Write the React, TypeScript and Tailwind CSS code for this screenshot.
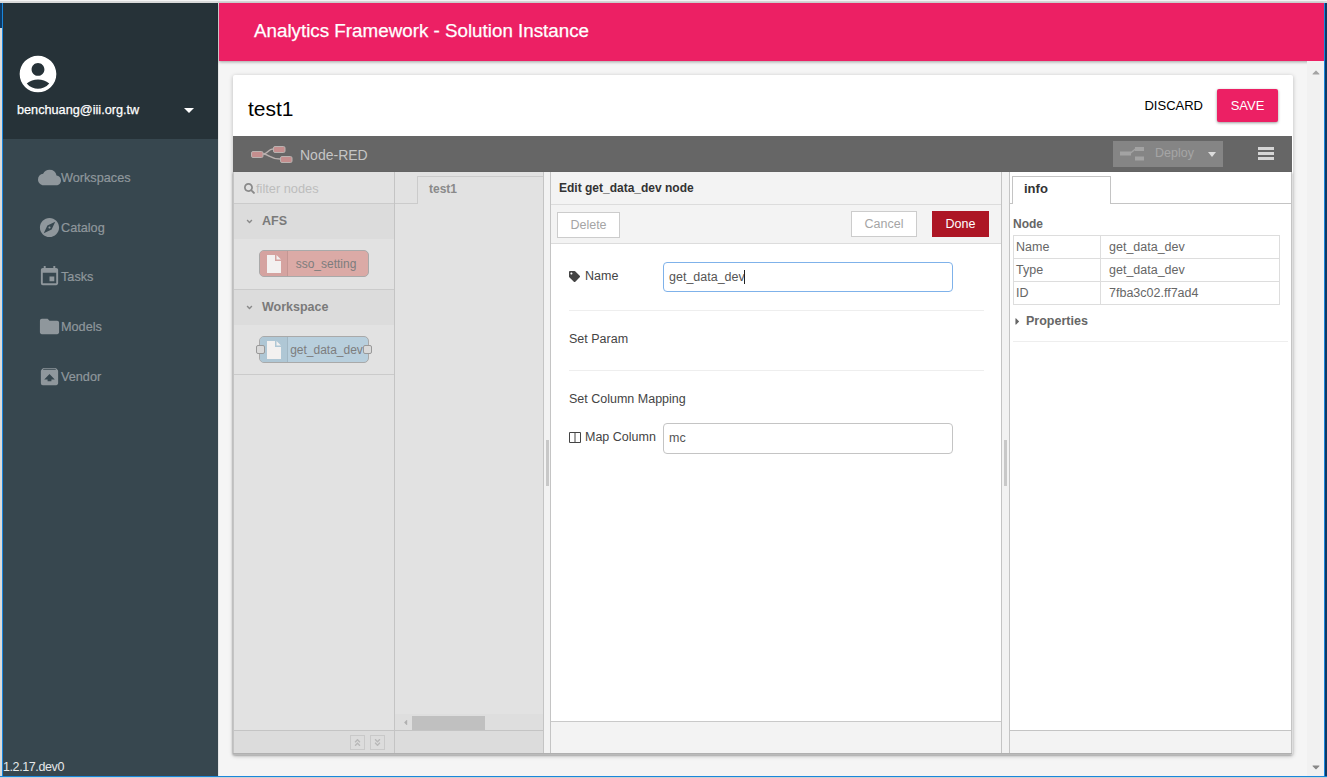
import React from "react";
import {
  MdAccountCircle, MdArrowDropDown, MdCloud, MdExplore, MdEvent, MdFolder, MdUnarchive,
} from "react-icons/md";
import {
  FaSearch, FaTag, FaAngleDown, FaCaretRight, FaAngleDoubleUp, FaAngleDoubleDown, FaCaretDown,
} from "react-icons/fa";

const arial = "font-['Liberation_Sans',Arial,sans-serif]";

const nav = [
  { label: "Workspaces", Icon: MdCloud },
  { label: "Catalog", Icon: MdExplore },
  { label: "Tasks", Icon: MdEvent },
  { label: "Models", Icon: MdFolder },
  { label: "Vendor", Icon: MdUnarchive },
];

function FileIcon() {
  return (
    <svg width="14" height="18" viewBox="0 0 14 18">
      <path d="M0 0H8V6H14V18H0Z" fill="#f3f1f0" />
      <path d="M9.500 0L14 4.500H9.500Z" fill="#f3f1f0" />
    </svg>
  );
}

function PaletteNode({ label, color, iconColor, ports }: { label: string; color: string; iconColor: string; ports?: boolean }) {
  return (
    <div className="relative w-[110px] h-[27px] rounded-[5px] border border-[#a9a9a9] flex" style={{ background: color }}>
      <div className="w-[28px] rounded-l-[4px] flex items-center justify-center border-r border-[#00000014]" style={{ background: iconColor }}>
        <FileIcon />
      </div>
      <div className={`flex-1 text-center text-[12px] leading-[26px] text-[#7d7d7d] whitespace-nowrap ${ports ? "pr-[3px]" : "pr-[4px]"}`}>{label}</div>
      {ports && (
        <>
          <span className="absolute left-[-4px] top-[8px] w-[9px] h-[9px] rounded-[2px] bg-[#d9d9d9] border border-[#999]" />
          <span className="absolute right-[-4px] top-[8px] w-[9px] h-[9px] rounded-[2px] bg-[#d9d9d9] border border-[#999]" />
        </>
      )}
    </div>
  );
}

function Category({ label, tall, children }: { label: string; tall?: boolean; children: React.ReactNode }) {
  return (
    <div className="border-b border-[#cbcbcb]">
      <div className="h-[35px] pb-[1px] bg-[#dcdcdc] flex items-center text-[12.5px] font-bold text-[#7a7a7a]">
        <FaAngleDown className="ml-[11px] mr-[8px] text-[9px] text-[#8a8a8a]" />
        {label}
      </div>
      <div className={`${tall ? "h-[50px]" : "h-[49px]"} pl-[25px] pt-[11px] bg-[#e2e2e2]`}>{children}</div>
    </div>
  );
}

function Row({ k, v }: { k: string; v: string }) {
  return (
    <div className="flex h-[23px] last:h-[22px] border-b border-[#dddddd] last:border-b-0 text-[12.5px] leading-[22px] text-[#666]">
      <div className="w-[87px] pl-[2px] border-r border-[#dddddd]">{k}</div>
      <div className="pl-[8px]">{v}</div>
    </div>
  );
}

export default function App() {
  return (
    <div className={`w-[1327px] h-[778px] overflow-hidden flex flex-col bg-[#f5f5f5] ${arial}`}>
      <div className="h-[3px] bg-[#d9d9d9] border-t border-[#f4f4f4] shrink-0" />
      <div className="flex-1 flex min-h-0">
        <div className="w-[2px] flex flex-col bg-[#dcdcdc] shrink-0">
          <div className="h-[25px] bg-[#0d3a66]" />
        </div>
        <div className="w-px bg-[#1a86dc] shrink-0" />
        {/* sidebar */}
        <aside className="w-[215px] flex flex-col bg-[#37474f] shrink-0">
          <div className="h-[136px] bg-[#263238] text-white px-[14px] pt-[49px] shrink-0">
            <MdAccountCircle className="text-[44px] -ml-[1px]" />
            <div className="mt-[2px] flex items-center justify-between pr-[3px]">
              <span className="text-[12.7px] leading-[20px] [-webkit-text-stroke:0.25px_white]">benchuang@iii.org.tw</span>
              <MdArrowDropDown className="text-[24px]" />
            </div>
          </div>
          <nav className="pt-[27px] flex flex-col gap-[26.7px]">
            {nav.map(({ label, Icon }) => (
              <div key={label} className="h-[23px] pl-[35px] flex items-center text-[#8f979c]">
                <Icon className="text-[23px] w-[23px] shrink-0" />
                <span className="pt-[2px] text-[12.7px] [-webkit-text-stroke:0.2px_#8f979c]">{label}</span>
              </div>
            ))}
          </nav>
          <div className="mt-auto h-[18px] text-[12.5px] tracking-[-0.4px] text-[#e6e8e9] leading-[18px]">1.2.17.dev0</div>
        </aside>
        <div className="w-px bg-[#e6e6e6] shrink-0" />
        {/* main */}
        <main className="flex-1 flex flex-col min-w-0 bg-[#f5f5f5]">
          <header className="h-[58px] pb-[1px] bg-[#ec2064] shadow-[0_1px_3px_rgba(0,0,0,0.35)] pl-[35px] flex items-center text-white text-[18.8px] [-webkit-text-stroke:0.25px_white] shrink-0">
            Analytics Framework - Solution Instance
          </header>
          <div className="flex-1 flex min-h-0">
            <div className="flex-1 px-[14px] pt-[14px] min-w-0">
              <div className="h-[680px] bg-white rounded-[2px] shadow-[0_1px_4px_rgba(0,0,0,0.25)] flex flex-col">
                <div className="h-[61px] flex items-center justify-between px-[15px] shrink-0">
                  <span className="text-[21px] text-black pt-[6px]">test1</span>
                  <div className="flex items-center gap-[14px]">
                    <span className="text-[13px] text-black">DISCARD</span>
                    <button className="w-[61px] h-[33px] rounded-[2px] bg-[#ec2064] text-white text-[13px] shadow-[0_1px_3px_rgba(0,0,0,0.4)]">SAVE</button>
                  </div>
                </div>
                {/* Node-RED */}
                <div className="w-[1059px] h-[618px] flex flex-col">
                  <div className="h-[36px] bg-[#666666] flex items-center shrink-0">
                    <svg width="42" height="18" viewBox="0 0 42 18" className="ml-[18px] mt-[2px]">
                      <path d="M12 8C17 8 17 3 22 3M12 8C18 8 19 13 29 13" stroke="#b8b0ae" strokeWidth="1.500" fill="none" />
                      <rect x="0.500" y="5.500" width="11.500" height="6" rx="1.500" fill="#c48e8e" stroke="#b9b2b0" />
                      <rect x="22.500" y="0.500" width="11.500" height="6" rx="1.500" fill="#c48e8e" stroke="#b9b2b0" />
                      <rect x="29.500" y="10.500" width="11.500" height="6" rx="1.500" fill="#c48e8e" stroke="#b9b2b0" />
                    </svg>
                    <span className="ml-[7px] text-[14px] text-[#c5c5c5] pt-[2px]">Node-RED</span>
                    <div className="ml-auto w-[110px] h-[26px] bg-[#858585] flex items-center mr-[35px]">
                      <svg width="24" height="14" viewBox="0 0 24 14" className="ml-[7px]">
                        <rect x="0" y="4.500" width="11" height="4" fill="#a3a3a3" />
                        <path d="M10 6.500L16 1.500" stroke="#a3a3a3" strokeWidth="1.500" />
                        <rect x="15" y="0" width="9" height="4" fill="#a3a3a3" />
                        <rect x="15" y="9.500" width="9" height="4" fill="#a3a3a3" />
                      </svg>
                      <span className="ml-[11px] pb-[1px] text-[12.5px] text-[#a5a5a5]">Deploy</span>
                      <svg width="8" height="5" viewBox="0 0 8 5" className="ml-[14px]"><path d="M0 0H8L4 5Z" fill="#dcdcdc" /></svg>
                    </div>
                    <svg width="16" height="14" viewBox="0 0 16 14" className="mr-[18px]">
                      <rect y="0" width="16" height="3" fill="#d6d6d6" />
                      <rect y="5" width="16" height="3" fill="#d6d6d6" />
                      <rect y="10" width="16" height="3" fill="#d6d6d6" />
                    </svg>
                  </div>
                  <div className="flex-1 flex min-h-0 shadow-[0_1px_2px_rgba(0,0,0,0.4)] border-b border-[#b0b0b0]">
                    {/* palette */}
                    <div className="w-[162px] bg-[#e2e2e2] border-x border-[#c4c4c4] flex flex-col shrink-0">
                      <div className="h-[32px] pt-[2px] border-b border-[#cbcbcb] flex items-center pl-[10px] shrink-0">
                        <FaSearch className="text-[11px] text-[#8a8a8a] mr-[1px]" />
                        <span className="text-[#bdbdbd] text-[12.8px]">filter nodes</span>
                      </div>
                      <Category label="AFS" tall>
                        <PaletteNode label="sso_setting" color="#dbaaa6" iconColor="#d5a3a0" />
                      </Category>
                      <Category label="Workspace">
                        <PaletteNode label="get_data_dev" color="#b8cfdd" iconColor="#afc7d5" ports />
                      </Category>
                      <div className="flex-1" />
                      <div className="h-[23px] border-t border-[#c4c4c4] bg-[#dcdcdc] flex items-center justify-end gap-[5px] pr-[9px] shrink-0">
                        <span className="w-[15px] h-[15px] border border-[#c9c9c9] flex items-center justify-center text-[#b8b8b8] text-[9px]"><FaAngleDoubleUp /></span>
                        <span className="w-[15px] h-[15px] border border-[#c9c9c9] flex items-center justify-center text-[#b8b8b8] text-[9px]"><FaAngleDoubleDown /></span>
                      </div>
                    </div>
                    {/* workspace */}
                    <div className="w-[149px] bg-[#e2e2e2] flex flex-col shrink-0 border-r border-[#c4c4c4]">
                      <div className="h-[32px] flex shrink-0">
                        <div className="w-[22px] border-b border-[#cbcbcb]" />
                        <div className="flex-1 mt-[4px] border-l border-t border-[#cbcbcb] pl-[11px] text-[12px] font-bold text-[#8a8a8a] leading-[24px]">test1</div>
                      </div>
                      <div className="flex-1" />
                      <div className="h-[16px] bg-[#dedede] flex items-end pl-[6px] shrink-0">
                        <FaCaretRight className="rotate-180 text-[9px] text-[#b0b0b0] mb-[3px]" />
                        <div className="ml-[2px] w-[73px] h-[14px] bg-[#c0c0c0]" />
                      </div>
                      <div className="h-[23px] border-t border-[#c4c4c4] bg-[#dcdcdc] shrink-0" />
                    </div>
                    {/* splitter */}
                    <div className="w-[6px] bg-[#f2f2f2] flex items-center shrink-0">
                      <div className="w-[3px] h-[46px] ml-[2px] bg-[#c8c8c8]" />
                    </div>
                    {/* tray */}
                    <div className="w-[452px] flex flex-col border-x border-[#c4c4c4] bg-white shrink-0 text-[#444]">
                      <div className="h-[33px] bg-[#f3f3f3] border-b border-[#dcdcdc] pl-[8px] text-[12px] font-bold text-[#333] leading-[32px] shrink-0">Edit get_data_dev node</div>
                      <div className="h-[39px] bg-[#f3f3f3] border-b border-[#dcdcdc] flex items-start pt-[6px] px-[6px] shrink-0">
                        <button className="w-[63px] h-[26px] mt-[1px] bg-white border border-[#cccccc] text-[12.5px] text-[#a5a5a5]">Delete</button>
                        <button className="ml-auto w-[66px] h-[26px] bg-white border border-[#cccccc] text-[12.5px] text-[#a5a5a5]">Cancel</button>
                        <button className="ml-[15px] w-[57px] h-[26px] mr-[6px] bg-[#ad1625] text-[12.5px] text-white">Done</button>
                      </div>
                      <div className="flex-1 pl-[18px] pr-[17px] text-[12.5px]">
                        <div className="h-[67px] border-b border-[#eeeeee] pt-[18px] flex">
                          <div className="w-[94px] flex pt-[7px] leading-[14px]">
                            <FaTag className="text-[11px] text-[#444] mr-[5px] mt-[2px]" />
                            Name
                          </div>
                          <div className="w-[290px] h-[30px] rounded-[4px] border border-[#7fb2ea] pl-[5px] leading-[28px] text-[#555] flex items-center">
                            get_data_dev<span className="w-px h-[14px] bg-[#222] -ml-[1px]" />
                          </div>
                        </div>
                        <div className="h-[60px] border-b border-[#eeeeee] pt-[20px] leading-[16px]">Set Param</div>
                        <div className="pt-[20px] leading-[16px]">Set Column Mapping</div>
                        <div className="mt-[16px] flex">
                          <div className="w-[94px] flex items-center h-[30px] -mt-[1px]">
                            <svg width="12" height="11" viewBox="0 0 12 11" className="mr-[4px]">
                              <path d="M0.500 0.500H11.500V10.500H0.500ZM6 0.500V10.500" fill="none" stroke="#444" />
                            </svg>
                            Map Column
                          </div>
                          <div className="w-[290px] h-[31px] rounded-[4px] border border-[#c4c4c4] pl-[5px] leading-[29px] text-[#555]">mc</div>
                        </div>
                      </div>
                      <div className="h-[32px] border-t border-[#c9c9c9] bg-[#f3f3f3] shrink-0" />
                    </div>
                    {/* sidebar separator */}
                    <div className="w-[7px] bg-[#f2f2f2] flex items-center shrink-0">
                      <div className="w-[3px] h-[46px] ml-[2px] bg-[#c8c8c8]" />
                    </div>
                    {/* info */}
                    <div className="flex-1 flex flex-col bg-white border-x border-[#c4c4c4] min-w-0">
                      <div className="h-[32px] border-b border-[#c4c4c4] flex items-end pl-[2px] shrink-0">
                        <div className="w-[99px] h-[28px] border-x border-t border-[#c4c4c4] bg-white -mb-px pl-[11px] text-[13px] font-bold text-[#333] leading-[24px]">info</div>
                      </div>
                      <div className="flex-1 px-[3px] pt-[12px]">
                        <div className="text-[12px] font-bold text-[#666] leading-[16px] mb-[3px]">Node</div>
                        <div className="w-[267px] border border-[#dddddd]">
                          <Row k="Name" v="get_data_dev" />
                          <Row k="Type" v="get_data_dev" />
                          <Row k="ID" v="7fba3c02.ff7ad4" />
                        </div>
                        <div className="h-[37px] pb-[4px] border-b border-[#eeeeee] flex items-center text-[12.5px] font-bold text-[#666]">
                          <FaCaretRight className="text-[11px] w-[7px] mr-[5px] ml-[1px]" />
                          Properties
                        </div>
                      </div>
                      <div className="h-[23px] border-t border-[#c4c4c4] bg-[#f3f3f3] shrink-0" />
                    </div>
                  </div>
                </div>
              </div>
            </div>
            {/* page scrollbar */}
            <div className="w-[17px] bg-[#f1f1f1] flex flex-col items-center justify-between pt-[6px] pb-[3px] text-[#a3a3a3] shrink-0">
              <FaCaretDown className="rotate-180 text-[12px]" />
              <FaCaretDown className="text-[12px] text-[#888]" />
            </div>
          </div>
        </main>
        <div className="w-px bg-[#1a86dc] shrink-0" />
        <div className="w-[2px] bg-[#0d3a66] shrink-0" />
      </div>
      <div className="h-px bg-[#1a86dc] shrink-0" />
      <div className="h-px bg-[#d0d0d0] shrink-0" />
    </div>
  );
}
